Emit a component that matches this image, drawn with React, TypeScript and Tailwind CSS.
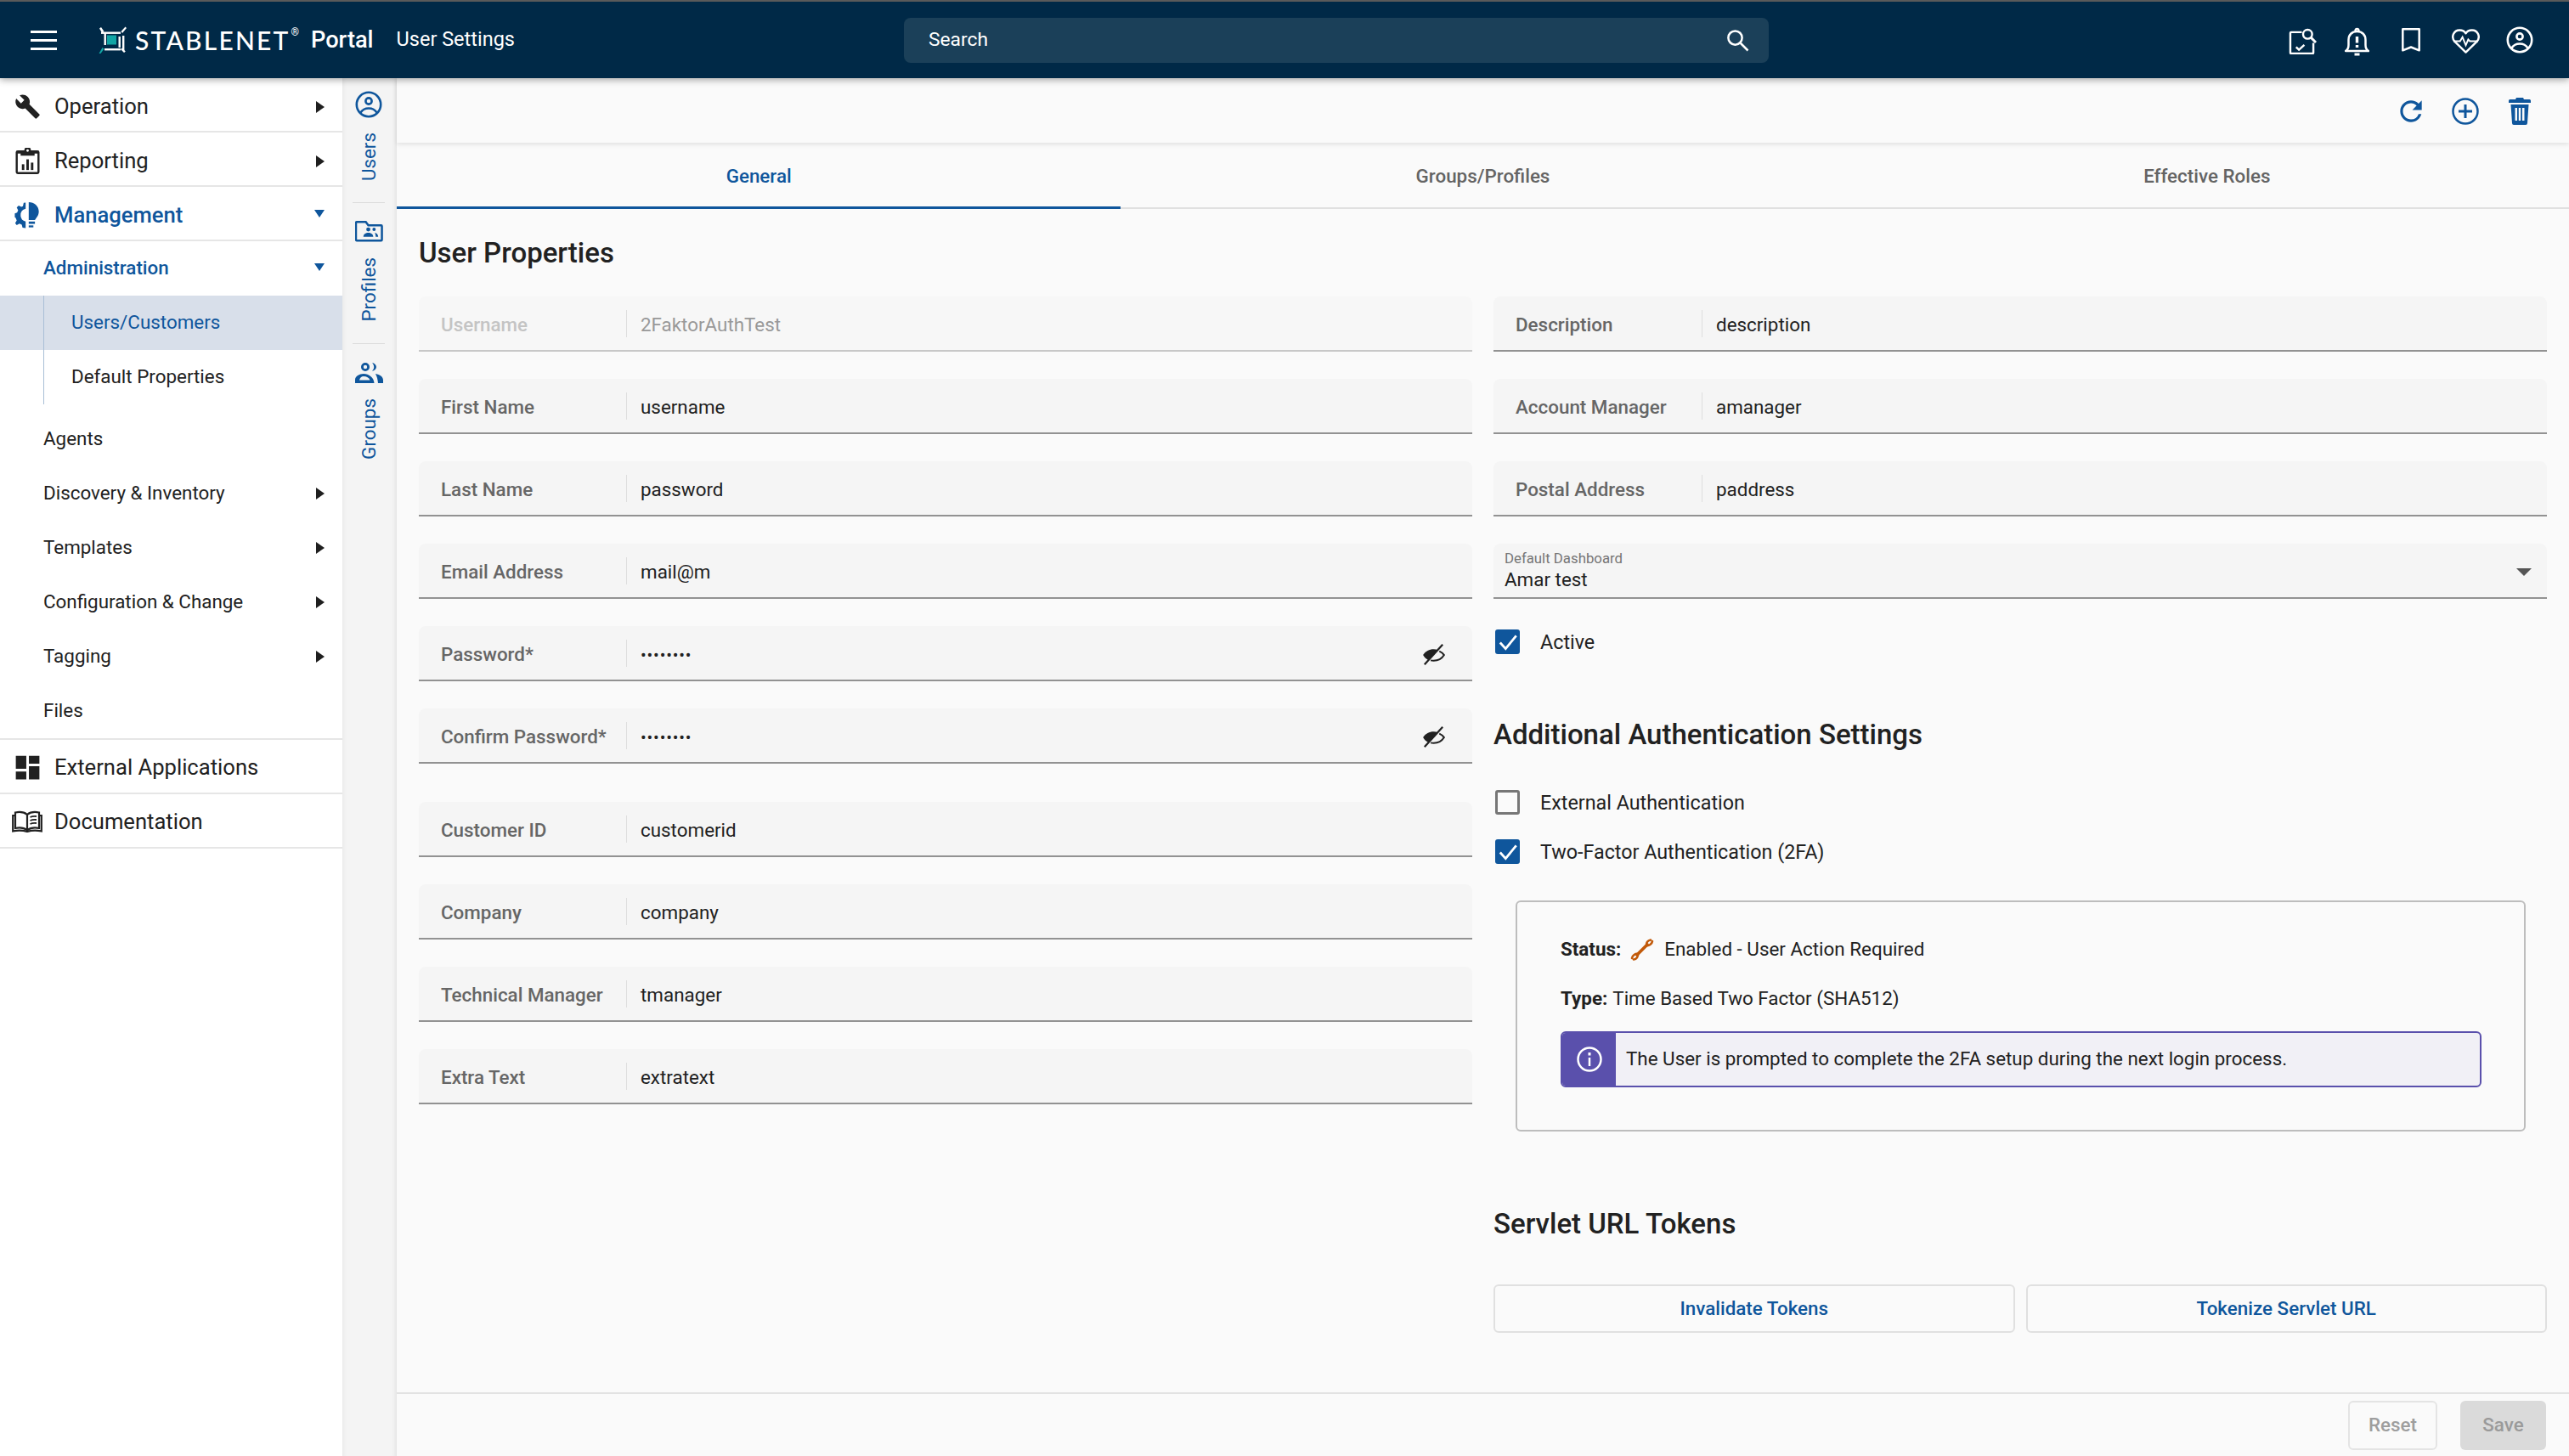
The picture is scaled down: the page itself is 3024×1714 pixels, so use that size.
import React from "react";
import { MdBuild, MdDashboard, MdRefresh } from "react-icons/md";

function UserCircle({ className }: { className?: string }) {
  return (
    <svg viewBox="0 0 32 32" className={className} fill="none" stroke="currentColor">
      <circle cx="16" cy="16" r="14.2" strokeWidth="2.6" />
      <circle cx="16" cy="12" r="3.6" strokeWidth="2.6" />
      <path d="M6.5 25.5c2-3.2 5.6-5 9.5-5s7.5 1.8 9.5 5" strokeWidth="2.6" />
    </svg>
  );
}

function Logo() {
  return (
    <svg viewBox="0 0 34 32" className="w-[34px] h-[32px]">
      <g fill="#fff">
        <rect x="3" y="6.5" width="23" height="2.4" />
        <rect x="7" y="26" width="19" height="2.4" />
        <rect x="6.5" y="8" width="2.4" height="14" />
        <rect x="23.5" y="12" width="2.4" height="13" />
        <rect x="28" y="11" width="2.4" height="17" />
        <path d="M1 2.5 3 1l3.5 5-2.5 1.500zM33 2l-1.500-1.500L26.500 6 28 8zM26 27l2-1.500 3.800 4-1.800 1.500z" />
      </g>
      <rect x="10" y="10.5" width="11" height="11" fill="#12a5a5" />
      <path d="M.5 32l4-7 2 1.500-4 5.500z" fill="#12a5a5" />
    </svg>
  );
}

function ArrowR() {
  return <span className="w-0 h-0 border-y-[7px] border-y-transparent border-l-[10px] border-l-[#1f1f1f]" />;
}
function ArrowD() {
  return <span className="w-0 h-0 mb-[4px] border-x-[6.5px] border-x-transparent border-t-[9px] border-t-[#0f569c]" />;
}

function TopRow({ icon, label, arrow, active, shift }: { icon: React.ReactNode; label: string; arrow?: "r" | "d"; active?: boolean; shift?: boolean }) {
  return (
    <div className={`h-[64px] flex items-center border-b-2 border-[#e6e6e6] ${shift ? "pt-[5px]" : "pt-[2px]"} ${active ? "text-[#0f569c] font-medium" : "text-[#212121]"}`}>
      <div className="w-[64px] flex justify-center shrink-0">{icon}</div>
      <span className="flex-1 text-[25.6px]">{label}</span>
      {arrow && <div className="w-[21px] mr-[21px] flex justify-end">{arrow === "r" ? <ArrowR /> : <ArrowD />}</div>}
    </div>
  );
}

function SubRow({ label, arrow }: { label: string; arrow?: boolean }) {
  return (
    <div className="h-[64px] flex items-center pl-[51px] pr-[21px] text-[22.4px] text-[#212121]">
      <span className="flex-1">{label}</span>
      {arrow && <ArrowR />}
    </div>
  );
}

function Nav() {
  return (
    <nav className="w-[403px] shrink-0 bg-white">
      <TopRow shift icon={<MdBuild className="w-[31px] h-[31px] text-[#212121]" />} label="Operation" arrow="r" />
      <TopRow
        shift
        label="Reporting"
        arrow="r"
        icon={
          <svg viewBox="0 0 30 32" className="w-[29px] h-[31px] text-[#212121]" fill="currentColor">
            <path fillRule="evenodd" d="M3 3h8a4 4 0 0 1 8 0h8a2.5 2.5 0 0 1 2.5 2.5v24A2.5 2.5 0 0 1 27 32H3a2.5 2.5 0 0 1-2.5-2.5v-24A2.5 2.5 0 0 1 3 3zm0 4v22.5h24V7h-3.5v2.5h-17V7zM15 1.800a1.500 1.500 0 1 0 0 3 1.500 1.500 0 0 0 0-3z" />
            <rect x="8" y="20" width="3" height="7" />
            <rect x="13.5" y="14" width="3" height="13" />
            <rect x="19" y="18" width="3" height="9" />
          </svg>
        }
      />
      <TopRow
        shift
        active
        label="Management"
        arrow="d"
        icon={
          <svg viewBox="0 0 32 34" className="w-[30px] h-[31px] text-[#0f569c]" fill="currentColor">
            <path d="M14 .5v8a8.500 8.500 0 0 0 0 16.500v8.500l-4-.500-1-4-3-1.300-3.500 2-2-2.500 2-3.500L1 20l-1-.500v-5l3-1.200 1.300-3-1.800-3.500 2.500-2.500 3.500 1.800 2-1 1-4.300z" />
            <path d="M18 0c7 0 13 5 13 12 0 5-3 8-5 11h-8z" />
            <rect x="18" y="25" width="8" height="3" />
            <rect x="18" y="30" width="6" height="2.5" />
          </svg>
        }
      />
      <div className="h-[64px] flex items-center pl-[51px] pr-[21px] text-[22.4px] font-medium text-[#0f569c]">
        <span className="flex-1">Administration</span>
        <ArrowD />
      </div>
      <div className="h-[64px] bg-[#d8dfea] flex">
        <div className="ml-[51px] w-px bg-[#a9bfd6]" />
        <div className="flex items-center pl-[32px] text-[22.4px] text-[#0f569c]">Users/Customers</div>
      </div>
      <div className="h-[64px] flex">
        <div className="ml-[51px] w-px bg-[#a9bfd6]" />
        <div className="flex items-center pl-[32px] text-[22.4px] text-[#212121]">Default Properties</div>
      </div>
      <div className="border-b-2 border-[#e6e6e6] pt-[9px]">
        <SubRow label="Agents" />
        <SubRow label="Discovery &amp; Inventory" arrow />
        <SubRow label="Templates" arrow />
        <SubRow label="Configuration &amp; Change" arrow />
        <SubRow label="Tagging" arrow />
        <SubRow label="Files" />
      </div>
      <TopRow icon={<MdDashboard className="w-[37px] h-[37px] text-[#212121]" />} label="External Applications" />
      <TopRow
        label="Documentation"
        icon={
          <svg viewBox="0 0 36 26" className="w-[36px] h-[26px] text-[#212121]" fill="none" stroke="currentColor" strokeWidth="2.2">
            <path d="M18 5C14.500 2 9 1.500 4 2.500V21c5-1 10.500-.500 14 2.500 3.500-3 9-3.500 14-2.500V2.500C27 1.500 21.500 2 18 5zM18 5v18" />
            <path d="M4 6H1.200v18.500C7 23.300 13 23.500 18 25c5-1.500 11-1.700 16.800-.500V6H32" />
            <path d="M21.500 8c2-1 5-1.300 7.500-1M21.500 12c2-1 5-1.300 7.500-1M21.500 16c2-1 5-1.300 7.500-1" strokeWidth="1.8" />
          </svg>
        }
      />
    </nav>
  );
}

function RailItem({ icon, label, last, gap }: { icon: React.ReactNode; label: string; last?: boolean; gap: string }) {
  return (
    <div className={`flex flex-col items-center ml-[12px] mr-[14px] ${last ? "pt-[22px]" : "border-b border-[#dcdcdc]"}`}>
      {icon}
      <span className={`${gap} mb-[25px] text-[22.4px] text-[#0f569c] [writing-mode:vertical-rl] rotate-180 leading-none`}>{label}</span>
    </div>
  );
}

function Rail() {
  return (
    <aside className="w-[64px] shrink-0 bg-[#f4f4f4] shadow-[inset_6px_0_6px_-6px_rgba(0,0,0,0.08),inset_-6px_0_6px_-6px_rgba(0,0,0,0.12)] pt-[15px]">
      <RailItem gap="mt-[17px]" label="Users" icon={<UserCircle className="w-[32px] h-[32px] text-[#0f569c]" />} />
      <div className="h-[20px]" />
      <RailItem
        gap="mt-[18px]"
        label="Profiles"
        icon={
          <svg viewBox="0 0 34 26" className="w-[33px] h-[26px] text-[#0f569c]" fill="none" stroke="currentColor" strokeWidth="2.6">
            <path d="M2 2h11l3 4h15.500a1 1 0 0 1 1 1v16.500a1 1 0 0 1-1 1H2a1 1 0 0 1-1-1V3a1 1 0 0 1 1-1z" />
            <circle cx="16" cy="11" r="2.5" fill="currentColor" stroke="none" />
            <path d="M10 20c0-3.500 3-5 6-5s6 1.500 6 5z" fill="currentColor" stroke="none" />
            <circle cx="23" cy="11" r="2" fill="currentColor" stroke="none" />
            <path d="M24 15c2 .5 4 2 4 5h-3c0-2-.5-3.500-1-5z" fill="currentColor" stroke="none" />
          </svg>
        }
      />
      <RailItem
        last
        gap="mt-[18px]"
        label="Groups"
        icon={
          <svg viewBox="0 0 33 24" className="w-[33px] h-[24px] text-[#0f569c]" fill="currentColor">
            <path fillRule="evenodd" d="M12 0a5 5 0 1 1 0 10 5 5 0 0 1 0-10zm0 2.800a2.200 2.200 0 1 0 0 4.400 2.200 2.200 0 0 0 0-4.400z" />
            <path d="M20 .3a5 5 0 0 1 5 4.700 5 5 0 0 1-5 4.700c1.500-1.400 2.200-3 2.200-4.700S21.500 1.700 20 .3z" />
            <path fillRule="evenodd" d="M0 24v-4c0-4 5-7 10-7 6 0 12 4 12.500 11zM5 20.500h12.500c-1-2.800-4-4.500-7.500-4.500-2.500 0-4.500 2-5 4.500z" />
            <path d="M24 13c5 .8 9 3.500 9 7.500V24h-6c-.5-4-1-7.500-3-11z" />
          </svg>
        }
      />
    </aside>
  );
}

function EyeOff() {
  return (
    <svg viewBox="0 0 24 24" className="w-[27px] h-[27px] mr-[32px] mt-[3px] text-[#212121]" fill="none" stroke="currentColor">
      <path d="M1 12.500C3.500 8.500 7.500 6.500 12 6.500c1.700 0 3.200.3 4.500.8L6.800 18C4.300 16.800 2.300 15 1 12.500z" fill="currentColor" stroke="none" />
      <path d="M18 8.500c2.200 1 3.900 2.400 5 4-2.300 3.800-6.500 6-11 6-1 0-2-.1-3-.4" strokeWidth="1.8" />
      <path d="M2.500 22.500 21.500 1.500" strokeWidth="2" />
    </svg>
  );
}

function Field({ label, value, disabled, eye, rightCol }: { label: string; value: string; disabled?: boolean; eye?: boolean; rightCol?: boolean }) {
  return (
    <div className={`h-[65px] rounded-t-[8px] border-b-2 flex items-center ${disabled ? "bg-[#f7f7f7] border-[#c8c8c8]" : "bg-[#f5f5f5] border-[#929292]"}`}>
      <div className={`${rightCol ? "w-[246px]" : "w-[245px]"} shrink-0 pl-[26px] h-[32px] flex items-center border-r border-[#dedede] text-[22.4px] font-medium ${disabled ? "text-[#c4c4c4]" : "text-[#666666]"}`}>
        <span className="whitespace-nowrap pt-[4px]">{label}</span>
      </div>
      <div className={`flex-1 pl-[16px] pt-[4px] ${disabled ? "text-[#999999]" : "text-[#212121]"} ${eye ? "text-[20px] tracking-[0.8px]" : "text-[22.4px]"}`}>{value}</div>
      {eye && <EyeOff />}
    </div>
  );
}

function Check({ checked, label }: { checked?: boolean; label: string }) {
  return (
    <div className="flex items-center h-[29px]">
      <div className={`ml-[2px] w-[29px] h-[29px] rounded-[3px] flex items-center justify-center ${checked ? "bg-[#0f569c]" : "border-[3px] border-[#767676]"}`}>
        {checked && (
          <svg viewBox="0 0 24 24" className="w-[26px] h-[26px]" fill="none" stroke="#fff" strokeWidth="2.6">
            <path d="M3.500 12.500 9.500 19 21 5" />
          </svg>
        )}
      </div>
      <span className="ml-[24px] pt-[1px] text-[23.3px] text-[#212121]">{label}</span>
    </div>
  );
}

function IconSlot({ children }: { children: React.ReactNode }) {
  return <div className="w-[64px] flex items-center justify-center">{children}</div>;
}

function HeaderIcons() {
  return (
    <div className="flex items-center mr-[26px]">
      <IconSlot>
        <svg viewBox="0 0 34 32" className="w-[33px] h-[31px] mt-[2px]" fill="none" stroke="#fff" strokeWidth="2.5">
          <path d="M16 5H3a1 1 0 0 0-1 1v24a1 1 0 0 0 1 1h26a1 1 0 0 0 1-1V18" />
          <circle cx="23" cy="7.500" r="5.500" />
          <path d="m27 11.500 6 6" strokeWidth="3" />
          <path d="m9 23 3.500 3.500L19 20.500" />
        </svg>
      </IconSlot>
      <IconSlot>
        <svg viewBox="0 0 29 34" className="w-[29px] h-[34px] mt-[4px]" fill="none" stroke="#fff" strokeWidth="2.5">
          <path d="M1 28c2.500-1.500 3.500-3.500 3.500-7v-6c0-6 4-10 10-10s10 4 10 10v6c0 3.500 1 5.500 3.500 7z" strokeLinejoin="round" />
          <path d="M12.500 4.500c0-3.500 4-3.500 4 0" />
          <path d="M11.500 32h6" strokeWidth="3" />
          <path d="M14.500 11v7.500M14.500 21v3" strokeWidth="3.4" />
        </svg>
      </IconSlot>
      <IconSlot>
        <svg viewBox="0 0 22 28" className="w-[22px] h-[28px]" fill="none" stroke="#fff" strokeWidth="2.5">
          <path d="M1.300 1.300h19.400v25l-9.700-3.800-9.700 3.800z" strokeLinejoin="round" />
        </svg>
      </IconSlot>
      <IconSlot>
        <svg viewBox="0 0 34 30" className="w-[33px] h-[29px] mt-[3px]" fill="none" stroke="#fff" strokeWidth="2.5">
          <path d="M17 28.500 3.500 15.500C-1.500 9.500 2.500 1.500 9.500 1.500c3.500 0 6 1.500 7.500 4 1.500-2.500 4-4 7.500-4 7 0 11 8 6 14z" strokeLinejoin="round" />
          <path d="M2 15h8l3-5 4 10 3-7 2 2h10" strokeWidth="2" />
        </svg>
      </IconSlot>
      <IconSlot>
        <UserCircle className="w-[32px] h-[32px] text-white" />
      </IconSlot>
    </div>
  );
}

export default function App() {
  return (
    <div className="w-[3024px] h-[1714px] flex flex-col overflow-hidden bg-[#fafafa] font-[Roboto,sans-serif]">
      <header className="relative z-20 h-[92px] shrink-0 border-t-2 border-[#5a5a5a] bg-[#002947] flex items-center shadow-[0_2px_8px_rgba(0,0,0,0.35)] text-white">
        <div className="ml-[36px] w-[31px] flex flex-col gap-[7px]">
          <div className="h-[3px] bg-white" />
          <div className="h-[3px] bg-white" />
          <div className="h-[3px] bg-white" />
        </div>
        <div className="ml-[49px]"><Logo /></div>
        <span className="ml-[9px] font-[Lato,sans-serif] font-medium text-[30px] leading-none tracking-[2.2px]">STABLENET</span>
        <span className="text-[12px] leading-none self-start mt-[30px] ml-[1px]">®</span>
        <span className="ml-[14px] text-[27.2px] font-medium">Portal</span>
        <span className="ml-[27px] text-[23.5px]">User Settings</span>
        <div className="ml-[458px] w-[1018px] h-[53px] rounded-[8px] bg-[#1b4059] flex items-center pl-[29px] pr-[22px] text-[22.8px]">
          <span className="flex-1">Search</span>
          <svg viewBox="0 0 24 24" className="w-[30px] h-[30px]" fill="none" stroke="#fff" strokeWidth="2">
            <circle cx="10" cy="10" r="6.5" />
            <path d="m15 15 7 7" />
          </svg>
        </div>
        <div className="flex-1" />
        <HeaderIcons />
      </header>
      <div className="flex-1 flex min-h-0">
        <Nav />
        <Rail />
        <main className="flex-1 min-w-0 flex flex-col">
          <div className="relative z-10 h-[76px] shrink-0 bg-[#fafafa] shadow-[0_2px_5px_rgba(0,0,0,0.1)] flex items-center justify-end pr-[26px] pt-[2px] text-[#0f569c]">
            <IconSlot><MdRefresh className="w-[38px] h-[38px]" /></IconSlot>
            <IconSlot>
              <svg viewBox="0 0 32 32" className="w-[32px] h-[32px]" fill="none" stroke="currentColor" strokeWidth="2.5">
                <circle cx="16" cy="16" r="14.5" />
                <path d="M16 8v16M8 16h16" strokeWidth="3" />
              </svg>
            </IconSlot>
            <IconSlot>
              <svg viewBox="0 0 26 32" className="w-[26px] h-[32px]" fill="currentColor">
                <path fillRule="evenodd" d="M9 0h8l1 2h6.500A1.500 1.500 0 0 1 26 3.500V6H0V3.500A1.500 1.500 0 0 1 1.500 2H8zM2.500 8h21l-1.500 22a2 2 0 0 1-2 2H6a2 2 0 0 1-2-2zM7.500 12v15H10V12zm4.300 0v15h2.400V12zm4.200 0v15h2.500V12z" />
              </svg>
            </IconSlot>
          </div>
          <div className="h-[78px] shrink-0 border-b-2 border-[#e0e0e0] grid grid-cols-3 text-[22.4px] font-medium text-[#646464]">
            <div className="flex items-center justify-center text-[#0f569c] border-b-[3px] border-[#0f569c] h-[78px] pt-[4px]">General</div>
            <div className="flex items-center justify-center pt-[1px]">Groups/Profiles</div>
            <div className="flex items-center justify-center pt-[1px]">Effective Roles</div>
          </div>
          <div className="flex-1 min-h-0 px-[26px] grid grid-cols-2 gap-x-[25px] content-start">
            <div className="flex flex-col">
              <h2 className="text-[33px] font-medium text-[#212121] h-[38px] leading-[38px] mt-[33px] mb-[32px]">User Properties</h2>
              <div className="flex flex-col gap-[32px]">
                <Field disabled label="Username" value="2FaktorAuthTest" />
                <Field label="First Name" value="username" />
                <Field label="Last Name" value="password" />
                <Field label="Email Address" value="mail@m" />
                <Field eye label="Password*" value="••••••••" />
                <Field eye label="Confirm Password*" value="••••••••" />
              </div>
              <div className="flex flex-col gap-[32px] mt-[45px]">
                <Field label="Customer ID" value="customerid" />
                <Field label="Company" value="company" />
                <Field label="Technical Manager" value="tmanager" />
                <Field label="Extra Text" value="extratext" />
              </div>
            </div>
            <div className="flex flex-col">
              <div className="flex flex-col gap-[32px] mt-[103px]">
                <Field rightCol label="Description" value="description" />
                <Field rightCol label="Account Manager" value="amanager" />
                <Field rightCol label="Postal Address" value="paddress" />
                <div className="h-[65px] bg-[#f5f5f5] rounded-t-[8px] border-b-2 border-[#929292] relative pl-[13px] pt-[8px]">
                  <div className="text-[16.8px] leading-[18px] text-[#767676]">Default Dashboard</div>
                  <div className="mt-[3px] text-[22.4px] leading-[26px] text-[#212121]">Amar test</div>
                  <span className="absolute right-[18px] top-[29px] w-0 h-0 border-x-[9px] border-x-transparent border-t-[9px] border-t-[#555555]" />
                </div>
              </div>
              <div className="mt-[36px]"><Check checked label="Active" /></div>
              <h2 className="mt-[76px] text-[33px] font-medium text-[#212121] h-[38px] leading-[38px]">Additional Authentication Settings</h2>
              <div className="mt-[46px]"><Check label="External Authentication" /></div>
              <div className="mt-[29px]"><Check checked label="Two-Factor Authentication (2FA)" /></div>
              <div className="mt-[43px] ml-[26px] mr-[25px] h-[272px] rounded-[6px] border-2 border-[#bdbdbd] pl-[51px] pr-[50px] flex flex-col text-[22.4px] text-[#212121]">
                <div className="mt-[40px] h-[32px] flex items-center">
                  <b className="font-bold">Status:</b>
                  <svg viewBox="0 0 28 28" className="w-[28px] h-[28px] ml-[11px] mr-[12px]" fill="none" stroke="#c25a0a" strokeWidth="2.6" strokeLinecap="round">
                    <path d="M8 20 20 8" strokeWidth="3.8" />
                    <path d="M19 9C18.500 6 20.500 3 24 2.500M19 9C22 9.500 25.500 7.500 26 4" />
                    <path d="M9 19C9.500 22 7.500 25 4 25.500M9 19C6 18.500 2.500 20.500 2 24" />
                  </svg>
                  <span>Enabled - User Action Required</span>
                </div>
                <div className="mt-[26px] h-[32px] flex items-center">
                  <b className="font-bold mr-[6px]">Type:</b>
                  <span>Time Based Two Factor (SHA512)</span>
                </div>
                <div className="mt-[22px] h-[66px] rounded-[6px] border-2 border-[#5a50ac] bg-[#f1f0f6] flex items-center overflow-hidden">
                  <div className="w-[63px] h-full bg-[#5a50ac] flex items-center justify-center shrink-0">
                    <svg viewBox="0 0 32 32" className="w-[32px] h-[32px]" fill="none" stroke="#fff" strokeWidth="2.5">
                      <circle cx="16" cy="16" r="13.5" />
                      <path d="M16 14v10" />
                      <path d="M16 8v3.500" strokeWidth="3" />
                    </svg>
                  </div>
                  <span className="ml-[12px]">The User is prompted to complete the 2FA setup during the next login process.</span>
                </div>
              </div>
              <h2 className="mt-[90px] text-[33px] font-medium text-[#212121] h-[38px] leading-[38px]">Servlet URL Tokens</h2>
              <div className="mt-[52px] grid grid-cols-2 gap-x-[13px]">
                <button className="h-[57px] pt-[1px] rounded-[6px] border-2 border-[#e0e0e0] text-[22.4px] font-medium text-[#0f569c]">Invalidate Tokens</button>
                <button className="h-[57px] pt-[1px] rounded-[6px] border-2 border-[#e0e0e0] text-[22.4px] font-medium text-[#0f569c]">Tokenize Servlet URL</button>
              </div>
            </div>
          </div>
          <div className="h-[75px] shrink-0 border-t-2 border-[#e2e2e2] flex items-start justify-end gap-[27px] pr-[27px] pt-[8px] text-[22.4px] font-medium">
            <button className="w-[105px] h-[58px] rounded-[6px] border-2 border-[#e4e4e4] text-[#9e9e9e]">Reset</button>
            <button className="w-[101px] h-[58px] rounded-[6px] bg-[#dadada] text-[#9a9a9a]">Save</button>
          </div>
        </main>
      </div>
    </div>
  );
}
